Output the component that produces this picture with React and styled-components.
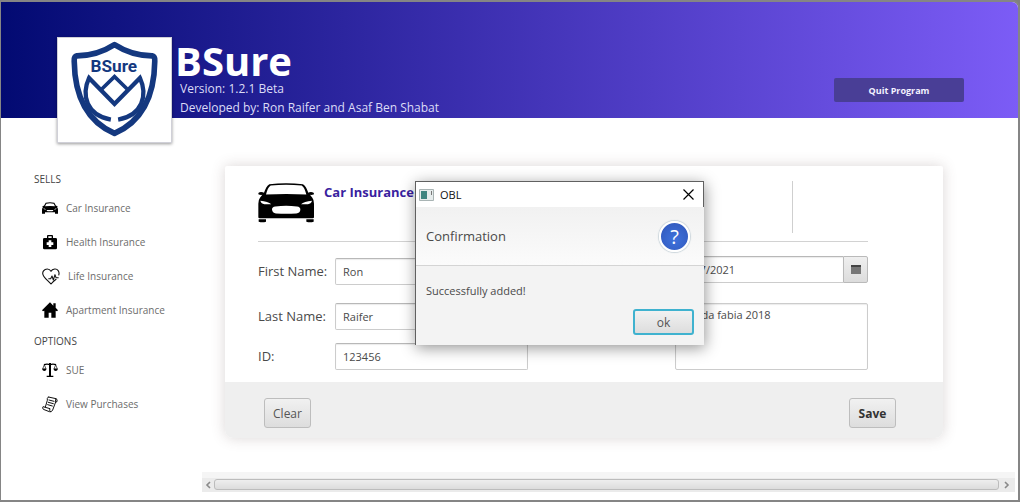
import React from "react";
import styled, { createGlobalStyle } from "styled-components";

const Global = createGlobalStyle`
  * { box-sizing: border-box; }
  body { margin: 0; background: #7f7f7f; font-family: "Open Sans", "Noto Sans", sans-serif; color: #4a4a4a; }
  button, input, textarea { font-family: inherit; color: inherit; margin: 0; }
`;

const Window = styled.div`
  min-height: 100vh;
  display: flex;
  flex-direction: column;
  border: solid #858585;
  border-width: 2px 2px 2px 1px;
  border-radius: 2px 8px 2px 2px;
  background: #fff;
  position: relative;
`;

const Header = styled.header`
  height: 116px;
  display: flex;
  align-items: flex-start;
  padding: 35px 54px 0 56px;
  border-top-right-radius: 6px;
  background: linear-gradient(90deg, #020a72 0%, #3a2eae 45%, #7c5cf6 100%);
  color: #fff;
`;

const LogoCard = styled.div`
  width: 115px;
  height: 106px;
  background: #fff;
  border: 1px solid #d0d0d8;
  box-shadow: 0 1px 3px rgba(0, 0, 0, 0.4);
  svg { display: block; }
`;

const Brand = styled.div`
  flex: 1;
  padding-left: 3px;
`;

const BrandName = styled.h1`
  margin: 6px 0 0;
  font-size: 40px;
  line-height: 36px;
  font-weight: 700;
`;

const BrandLine = styled.p`
  margin: 0;
  padding-left: 5px;
  font-size: 12px;
  line-height: 19px;
  color: #dcdcf6;
  white-space: nowrap;
`;

const QuitButton = styled.button`
  width: 130px;
  height: 24px;
  margin-top: 41px;
  padding: 0;
  border: 0;
  border-radius: 2px;
  background: #493e96;
  color: #f4f2ff;
  font-size: 9px;
  font-weight: 700;
`;

const Content = styled.div`
  flex: 1;
  display: flex;
`;

const Sidebar = styled.nav`
  width: 201px;
  padding: 47px 0 0 33px;
`;

const SideHeading = styled.h2`
  margin: 4px 0 2px;
  font-size: 10px;
  line-height: 20px;
  font-weight: 400;
  color: #444;
`;

const SideLink = styled.a`
  display: flex;
  align-items: center;
  gap: 8px;
  height: 34px;
  padding-left: 8px;
  font-size: 10px;
  color: #6c6c6c;
  text-decoration: none;
  svg { color: #000; flex: none; }
`;

const Main = styled.main`
  flex: 1;
  min-width: 0;
  display: flex;
  flex-direction: column;
  padding-top: 48px;
`;

const Card = styled.section`
  margin: 0 75px 34px 23px;
  border-radius: 2px 2px 8px 8px;
  box-shadow: 0 0 14px rgba(90, 70, 70, 0.22);
  background: #fff;
`;

const CardBody = styled.div`
  padding: 15px 75px 11px 33px;
`;

const CardHead = styled.div`
  display: flex;
  align-items: flex-start;
  height: 61px;
  padding-right: 75px;
  border-bottom: 1px solid #d2d2d2;
  > svg { margin-top: 2px; }
`;

const CardTitle = styled.h2`
  flex: 1;
  margin: 0 0 0 10px;
  font-size: 13px;
  line-height: 22px;
  font-weight: 700;
  color: #3a1fa0;
`;

const Divider = styled.span`
  width: 1px;
  height: 52px;
  background: #cfcfcf;
`;

const Form = styled.div`
  display: flex;
  justify-content: space-between;
`;

const Fields = styled.div`
  display: grid;
  grid-template-columns: 77px 193px;
  grid-template-rows: ${(p) => p.$rows};
  align-items: start;
  padding-top: ${(p) => p.$top}px;
`;

const Label = styled.label`
  font-size: 13px;
  line-height: 27px;
  white-space: nowrap;
`;

const TextInput = styled.input`
  width: 100%;
  height: 27px;
  padding: 0 7px;
  border: 1px solid #cccccc;
  border-top-color: #b8b8b8;
  border-radius: 2px;
  background: #fff;
  box-shadow: inset 0 1px 1px #ececec;
  font-size: 11px;
  outline: none;
`;

const DateField = styled.div`
  display: flex;
  ${TextInput} { flex: 1; min-width: 0; border-radius: 2px 0 0 2px; border-right: 0; }
`;

const DateButton = styled.button`
  width: 25px;
  height: 27px;
  padding: 0;
  display: grid;
  place-items: center;
  border: 1px solid #bababa;
  border-radius: 0 2px 2px 0;
  background: linear-gradient(#efefef, #dcdcdc);
`;

const TextArea = styled.textarea`
  display: block;
  width: 100%;
  height: 67px;
  padding: 1px 7px;
  border: 1px solid #cccccc;
  border-radius: 2px;
  box-shadow: inset 0 1px 1px #ececec;
  font-size: 11px;
  line-height: 20px;
  resize: none;
  outline: none;
`;

const CardFooter = styled.div`
  display: flex;
  justify-content: space-between;
  padding: 16px 47px 10px 39px;
  border-radius: 0 0 8px 8px;
  background: #efefef;
`;

const Button = styled.button`
  width: ${(p) => p.$width || 47}px;
  height: ${(p) => p.$height || 30}px;
  padding: 0;
  border: ${(p) => (p.$focused ? "2px solid #3fb2cf" : "1px solid #bdbdbd")};
  border-radius: 3px;
  background: linear-gradient(#f1f1f1, #dddddd);
  font-size: 12px;
  font-weight: ${(p) => (p.$bold ? 700 : 400)};
  color: ${(p) => (p.$bold ? "#333" : "#555")};
`;

const ScrollBar = styled.div`
  display: flex;
  align-items: center;
  height: 20px;
  margin: auto 3px 8px 0;
  padding-top: 5px;
  background: linear-gradient(#f5f5f5 6px, #ebebeb 6px);
`;

const ScrollArrow = styled.button`
  width: ${(p) => p.$width}px;
  height: 12px;
  padding: 0;
  border: 0;
  background: none;
  display: grid;
  place-items: center;
`;

const ScrollThumb = styled.div`
  flex: 1;
  height: 11px;
  border: 1px solid #bcbcbc;
  border-radius: 3px;
  background: linear-gradient(#eeeeee, #dcdcdc);
`;

const Dialog = styled.div`
  position: absolute;
  left: 414px;
  top: 179px;
  width: 289px;
  border: solid #606060;
  border-width: 1px 0 0 1px;
  background: #f3f3f3;
  box-shadow: 1px 3px 14px rgba(0, 0, 0, 0.42);
`;

const TitleBar = styled.div`
  display: flex;
  align-items: center;
  height: 25px;
  padding: 0 9px 0 3px;
  border-right: 1px solid #606060;
  background: #fff;
`;

const DialogTitle = styled.span`
  flex: 1;
  padding-left: 6px;
  font-size: 11px;
  color: #111;
`;

const CloseButton = styled.button`
  padding: 0;
  border: 0;
  background: none;
  display: flex;
`;

const DialogHead = styled.div`
  display: flex;
  align-items: center;
  justify-content: space-between;
  height: 59px;
  padding: 0 14px 0 10px;
  border-bottom: 1px solid #d4d4d4;
  background: linear-gradient(#f1f1f1, #fbfbfb);
  font-size: 13px;
`;

const QuestionBadge = styled.span`
  width: 31px;
  height: 31px;
  display: grid;
  place-items: center;
  border: 2px solid #fff;
  border-radius: 50%;
  background: radial-gradient(circle at 50% 60%, #3f72dc, #2f55b8);
  box-shadow: 0 0 1px 1px #ccd6dc;
  color: #fff;
  font-size: 20px;
  line-height: 27px;
`;

const DialogText = styled.p`
  margin: 0;
  padding: 15px 10px 0;
  font-size: 11px;
  line-height: 20px;
`;

const DialogActions = styled.div`
  display: flex;
  justify-content: flex-end;
  padding: 8px 10px 10px;
`;

function Logo() {
  return (
    <svg width="113" height="104" viewBox="22 22 342 315" fill="none" stroke="#14387f" strokeLinejoin="miter">
      <path strokeWidth="17" strokeLinejoin="round" d="M193 42Q140 76 79 76Q70 78 71 92C72 175 95 268 193 311C291 268 314 175 315 92Q316 78 307 76Q246 76 193 42Z" />
      <path strokeWidth="13" d="M182 269C108 256 92 195 116 143L193 222L270 143C294 195 278 256 204 269" />
      <path strokeWidth="11" d="M150 181L193 139L236 181" />
      <text x="191" y="126" textAnchor="middle" fill="#14387f" stroke="none" fontFamily="Roboto, sans-serif" fontWeight="700" fontSize="52">BSure</text>
    </svg>
  );
}

function CarIcon({ width, height }) {
  return (
    <svg width={width} height={height} viewBox="113 68 168 119" aria-hidden="true">
      <path fill="#000" fillRule="evenodd" d="M147 71Q197 65 248 71C256 76 260 86 264 97Q267 94 276 95Q283 97 280 102Q274 104 269 103L276 112Q281 118 281 130V170Q281 173 277 173H118Q114 173 114 170V130Q114 118 119 112L126 103Q120 104 115 102Q112 97 118 95Q127 94 131 97C135 86 139 76 147 71ZM151 75C144 80 140 90 137 102Q197 99 258 102C255 90 251 80 244 75Q197 70 151 75ZM120 121Q123 131 132 131L153 131Q143 124 120 121ZM275 121Q251 124 242 131L263 131Q272 131 275 121ZM165 138Q155 139 155 147Q156 158 167 159Q197 161 228 159Q240 158 240 147Q240 139 230 138Q197 134 165 138Z" />
      <path fill="#000" d="M115 176H137V184Q126 187 115 184ZM258 176H280V184Q269 187 258 184Z" />
    </svg>
  );
}

function SmallCarIcon() {
  return (
    <svg width="16" height="12" viewBox="0 0 48 36" aria-hidden="true">
      <path fill="#000" fillRule="evenodd" d="M11 2Q24 -1 37 2L42 11Q47 11 47 14L45 15Q48 18 48 23V35H39V31H9V35H0V23Q0 18 3 15L1 14Q1 11 6 11ZM13 5L9 13Q24 11 39 13L35 5Q24 3 13 5ZM4 19Q5 23 12 23Q10 20 4 19ZM44 19Q38 20 36 23Q43 23 44 19ZM14 24Q14 28 18 28H30Q34 28 34 24Z" />
    </svg>
  );
}

function MedicalBagIcon() {
  return (
    <svg width="16" height="16" viewBox="0 0 48 48" aria-hidden="true">
      <path fill="#000" fillRule="evenodd" d="M15 12V6Q15 3 18 3H30Q33 3 33 6V12H41Q45 12 45 16V42Q45 46 41 46H7Q3 46 3 42V16Q3 12 7 12ZM19 12H29V7H19ZM20 19V25H14V33H20V39H28V33H34V25H28V19Z" />
    </svg>
  );
}

function HeartIcon() {
  return (
    <svg width="18" height="17" viewBox="0 0 54 51" fill="none" stroke="#111" strokeWidth="3.4" strokeLinejoin="round" aria-hidden="true">
      <path d="M50 22C54 10 46 2 38 3Q30 4 27 10Q23 3 16 3C6 3 0 12 3 20C6 31 19 38 27 48Q34 40 43 33" />
      <path strokeWidth="3.2" d="M19 32H26L30 24L34 36L39 20L42 29H50" />
    </svg>
  );
}

function HouseIcon() {
  return (
    <svg width="16" height="16" viewBox="0 0 48 48" aria-hidden="true">
      <path fill="#000" d="M24 1L34 11V4H41V17L48 25L45 28L41 26V47H28V32H20V47H7V26L3 28L0 25Z" />
    </svg>
  );
}

function ScalesIcon() {
  return (
    <svg width="16" height="16" viewBox="0 0 48 48" fill="none" stroke="#000" aria-hidden="true">
      <path strokeWidth="6" d="M24 3V42" />
      <path strokeWidth="4" d="M6 8Q15 5 24 8Q33 5 42 8M14 43H34" />
      <path strokeWidth="2" d="M7 8L2 21H12ZM41 8L36 21H46Z" />
      <path fill="#000" stroke="none" d="M0 20H14Q12 27 7 27Q2 27 0 20ZM34 20H48Q46 27 41 27Q36 27 34 20Z" />
    </svg>
  );
}

function ReceiptIcon() {
  return (
    <svg width="16" height="17" viewBox="0 0 48 51" fill="none" stroke="#111" strokeWidth="3" strokeLinejoin="round" strokeLinecap="round" aria-hidden="true">
      <path d="M19 3Q14 7 16 13L10 33M19 3L42 8Q47 11 45 17L41 18L32 42Q28 50 22 47L4 40Q0 35 3 32L24 38Q21 43 25 47M41 18Q39 11 42 8" />
      <path d="M21 12L36 16M19 19L34 23M17 26L31 30" />
    </svg>
  );
}

function Chevron({ d }) {
  return (
    <svg width="6" height="8" viewBox="0 0 6 8" fill="none" stroke="#8a8a8a" strokeWidth="1.6" aria-hidden="true">
      <path d={d} />
    </svg>
  );
}

const sells = [
  ["Car Insurance", SmallCarIcon],
  ["Health Insurance", MedicalBagIcon],
  ["Life Insurance", HeartIcon],
  ["Apartment Insurance", HouseIcon],
];

const options = [
  ["SUE", ScalesIcon],
  ["View Purchases", ReceiptIcon],
];

function SideGroup({ title, items }) {
  return (
    <>
      <SideHeading>{title}</SideHeading>
      {items.map(([label, Icon]) => (
        <SideLink key={label} href="#">
          <Icon />
          {label}
        </SideLink>
      ))}
    </>
  );
}

export default function App() {
  return (
    <Window>
      <Global />
      <Header>
        <LogoCard>
          <Logo />
        </LogoCard>
        <Brand>
          <BrandName>BSure</BrandName>
          <BrandLine>Version: 1.2.1 Beta</BrandLine>
          <BrandLine>Developed by: Ron Raifer and Asaf Ben Shabat</BrandLine>
        </Brand>
        <QuitButton>Quit Program</QuitButton>
      </Header>
      <Content>
        <Sidebar>
          <SideGroup title="SELLS" items={sells} />
          <SideGroup title="OPTIONS" items={options} />
        </Sidebar>
        <Main>
          <Card>
            <CardBody>
              <CardHead>
                <CarIcon width={56} height={40} />
                <CardTitle>Car Insurance</CardTitle>
                <Divider />
              </CardHead>
              <Form>
                <Fields $rows="45px 40px 28px" $top={16}>
                  <Label htmlFor="first">First Name:</Label>
                  <TextInput id="first" defaultValue="Ron" />
                  <Label htmlFor="last">Last Name:</Label>
                  <TextInput id="last" defaultValue="Raifer" />
                  <Label htmlFor="id">ID:</Label>
                  <TextInput id="id" defaultValue="123456" />
                </Fields>
                <Fields $rows="47px 67px" $top={14}>
                  <Label htmlFor="date">Date:</Label>
                  <DateField>
                    <TextInput id="date" defaultValue="17/7/2021" />
                    <DateButton aria-label="Pick a date">
                      <svg width="10" height="9" viewBox="0 0 10 9">
                        <path fill="#777" d="M0 0H10V9H0Z" />
                        <path fill="#444" d="M0 0H10V2H0Z" />
                      </svg>
                    </DateButton>
                  </DateField>
                  <Label htmlFor="car">Car:</Label>
                  <TextArea id="car" defaultValue="Skoda fabia 2018" />
                </Fields>
              </Form>
            </CardBody>
            <CardFooter>
              <Button>Clear</Button>
              <Button $bold>Save</Button>
            </CardFooter>
          </Card>
          <ScrollBar>
            <ScrollArrow $width={12} aria-label="Scroll left">
              <Chevron d="M5 1L2 4L5 7" />
            </ScrollArrow>
            <ScrollThumb />
            <ScrollArrow $width={16} aria-label="Scroll right">
              <Chevron d="M1 1L4 4L1 7" />
            </ScrollArrow>
          </ScrollBar>
        </Main>
      </Content>
      <Dialog role="dialog" aria-label="OBL">
        <TitleBar>
          <svg width="15" height="12" viewBox="0 0 15 12" aria-hidden="true">
            <path fill="#e6ecec" stroke="#a9b4b4" d="M.5 .5H14.5V11.5H.5Z" />
            <path fill="#3f8580" d="M2 2H8V10H2Z" />
            <path stroke="#777" d="M12.500 2V6" />
          </svg>
          <DialogTitle>OBL</DialogTitle>
          <CloseButton aria-label="Close">
            <svg width="11" height="11" viewBox="0 0 11 11" stroke="#000" strokeWidth="1.2">
              <path d="M.5 .5L10.500 10.500M10.500 .5L.5 10.500" />
            </svg>
          </CloseButton>
        </TitleBar>
        <DialogHead>
          Confirmation
          <QuestionBadge>?</QuestionBadge>
        </DialogHead>
        <DialogText>Successfully added!</DialogText>
        <DialogActions>
          <Button $focused $width={61} $height={26}>ok</Button>
        </DialogActions>
      </Dialog>
    </Window>
  );
}
